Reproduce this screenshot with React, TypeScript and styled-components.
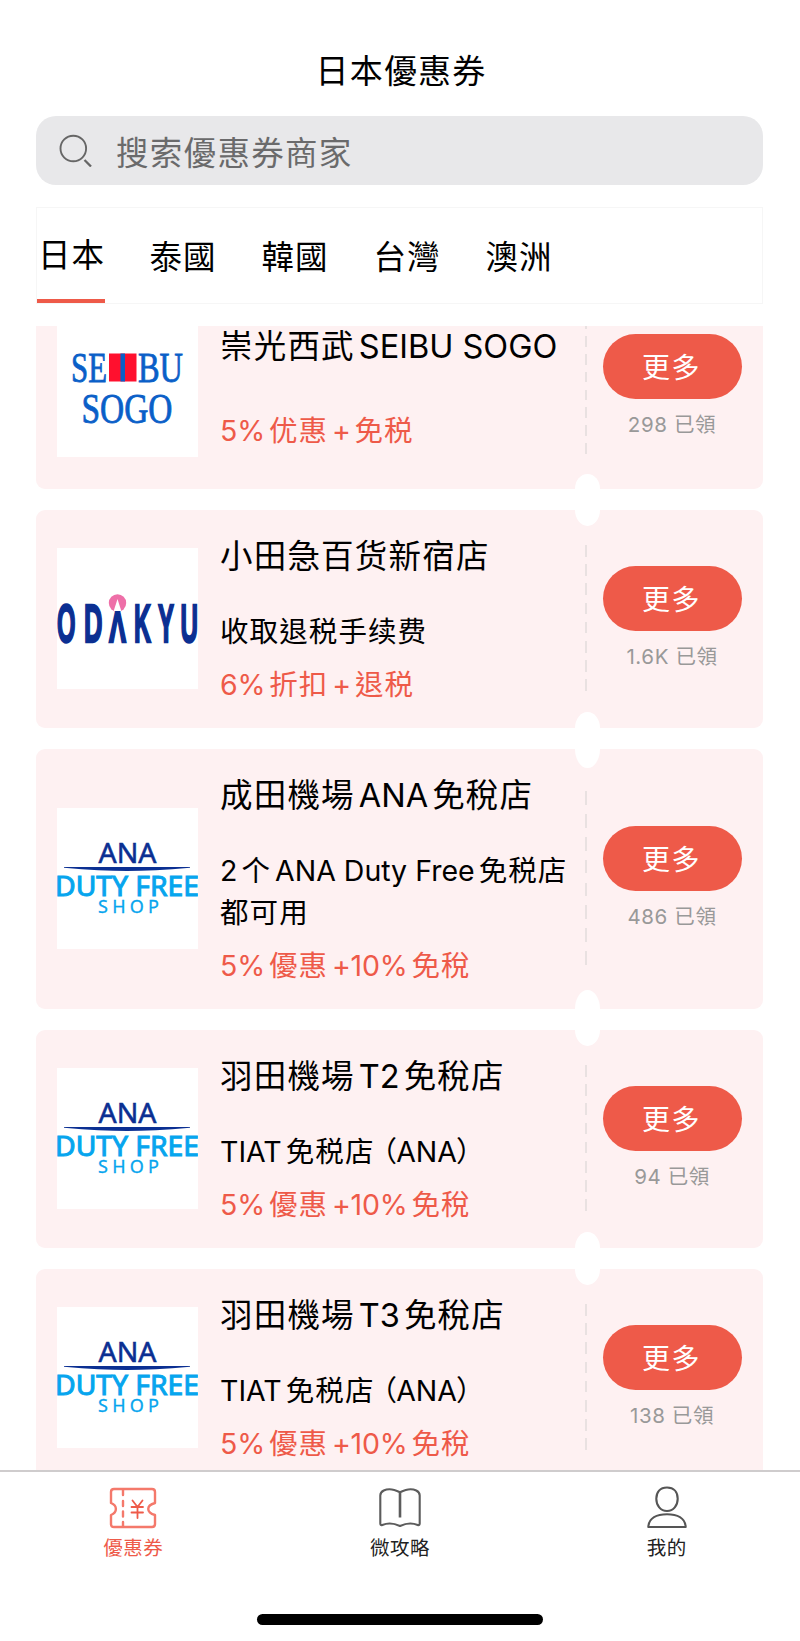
import React from 'react';
import styled, { createGlobalStyle } from 'styled-components';

const CORAL = '#ee5a49';

const GlobalStyle = createGlobalStyle`
  * { box-sizing: border-box; }
  body {
    margin: 0;
    background: #fff;
    color: #000;
    font-family: Inter, 'Noto Sans CJK TC', 'Noto Sans CJK SC', sans-serif;
  }
  button { font: inherit; border: 0; padding: 0; background: none; }
`;

const Screen = styled.div`
  width: 800px;
  height: 1641px;
  display: flex;
  flex-direction: column;
  overflow: hidden;
  background: #fff;
`;

const Header = styled.header`
  height: 116px;
  padding-top: 47px;
`;

const PageTitle = styled.h1`
  margin: 0;
  padding-left: 2px;
  text-align: center;
  font-size: 33px;
  font-weight: 400;
  line-height: 48px;
  letter-spacing: 1.2px;
`;

const SearchBar = styled.div`
  height: 69px;
  flex: none;
  margin: 0 37px 0 36px;
  padding: 0 0 1px 23px;
  display: flex;
  align-items: center;
  gap: 23px;
  border-radius: 20px;
  background: #e8e8ea;
  color: #6a6a6b;
  font-size: 32.5px;
  letter-spacing: 1.3px;
`;

const TabBar = styled.nav`
  height: 97px;
  flex: none;
  margin: 22px 37px 22px 36px;
  border: 1px solid #f6f6f6;
  display: flex;
  gap: 44px;
`;

const Tab = styled.button<{ $active?: boolean }>`
  width: 68px;
  padding: ${p => (p.$active ? '0 0 3px 1px' : '1px 0 0')};
  border-bottom: 4px solid ${p => (p.$active ? CORAL : 'transparent')};
  font-size: 32.5px;
  letter-spacing: 1px;
  white-space: nowrap;
  text-align: center;
`;

const List = styled.main`
  height: 1144px;
  flex: none;
  padding: 0 37px 0 36px;
  overflow: hidden;
  display: flex;
  flex-direction: column;
  gap: 21px;

  & > :first-child { margin-top: -41px; }
`;

const Card = styled.article`
  position: relative;
  flex: none;
  min-height: 204px;
  padding: 21px 21px 22px;
  display: flex;
  align-items: center;
  border-radius: 9px;
  background: #fef1f2;
`;

const Notch = styled.i<{ $edge: 'top' | 'bottom' }>`
  position: absolute;
  left: 539px;
  width: 25px;
  height: 14.6%;
  ${p => p.$edge}: -7.3%;
  border-radius: 50%;
  background: #fff;
`;

const LogoBox = styled.div`
  width: 141px;
  height: 141px;
  flex: none;
  background: #fff;
  svg { display: block; }
`;

const Info = styled.div`
  flex: 1;
  min-width: 0;
  padding-left: 22px;
  white-space: pre;
`;

const Name = styled.h2<{ $alone: boolean }>`
  margin: 0 0 ${p => (p.$alone ? 38 : 29)}px;
  padding-top: 1px;
  font-size: 32.5px;
  font-weight: 400;
  line-height: 50px;
  letter-spacing: 1.2px;
`;

const Note = styled.p`
  margin: 0;
  font-size: 28.5px;
  line-height: 42px;
  letter-spacing: 1.1px;
`;

const Latin = styled.span<{ $first: boolean; $last: boolean }>`
  margin-left: ${p => (p.$first ? 0 : 4)}px;
  margin-right: ${p => (p.$last ? 0 : 4)}px;
  letter-spacing: 0;
`;

const Offer = styled.p`
  margin: 11px 0 0;
  color: ${CORAL};
  font-size: 28.5px;
  line-height: 42px;
  letter-spacing: 1px;

  ${Latin} { letter-spacing: -0.2px; }
`;

const Paren = styled.span<{ $open: boolean }>`
  margin-left: ${p => (p.$open ? -6 : -1)}px;
  margin-right: ${p => (p.$open ? -2 : 0)}px;
`;

const PerforationTrack = styled.div`
  align-self: stretch;
  flex: none;
  display: flex;
  margin: -21px 16px -22px 0;
  padding-bottom: 2px;
`;

const Perforation = styled.i`
  width: 2px;
  height: 67.5%;
  align-self: center;
  background: repeating-linear-gradient(to bottom, #e9e1e1 0 7.89%, transparent 7.89% 13.158%);
`;

const Action = styled.div`
  width: 139px;
  flex: none;
  display: flex;
  flex-direction: column;
  align-items: center;
  padding-top: 1px;
`;

const MoreButton = styled.button`
  width: 139px;
  height: 65px;
  padding: 0 2px 1px 0;
  border-radius: 33px;
  background: ${CORAL};
  color: #fff;
  font-size: 28px;
  letter-spacing: 1.4px;
  text-align: center;
`;

const Count = styled.span`
  margin-top: 10px;
  padding-right: 1px;
  color: #999;
  font-size: 20.5px;
  line-height: 32px;
  letter-spacing: 0.6px;
  white-space: nowrap;
`;

const BottomNav = styled.nav`
  height: 110px;
  flex: none;
  display: grid;
  grid-template-columns: 1fr 1fr 1fr;
  border-top: 2px solid #cfcccd;
`;

const NavItem = styled.button<{ $active?: boolean }>`
  padding-top: 13px;
  display: flex;
  flex-direction: column;
  align-items: center;
  color: ${p => (p.$active ? CORAL : '#222')};
  font-size: 19.5px;
  line-height: 30px;
  letter-spacing: 0.5px;
  svg { display: block; }
`;

const HomeIndicator = styled.div`
  width: 286px;
  height: 11px;
  flex: none;
  margin: 34px auto 0;
  border-radius: 6px;
  background: #000;
`;

/* Splits a string so Latin runs get a thin gap against neighbouring Han characters. */
const Mixed = ({ text }: { text: string }) => {
  const parts = text.split(/([\x21-\x7e]+(?: [\x21-\x7e]+)*|[（）])/).filter(Boolean);
  return (
    <>
      {parts.map((part, i) => {
        if (part === '（' || part === '）') return <Paren key={i} $open={part === '（'}>{part}</Paren>;
        if (/^[\x21-\x7e]/.test(part)) {
          const prev = parts[i - 1];
          const next = parts[i + 1];
          return (
            <Latin key={i} $first={!prev || prev === '（'} $last={!next || next === '）'}>
              {part}
            </Latin>
          );
        }
        return <React.Fragment key={i}>{part}</React.Fragment>;
      })}
    </>
  );
};

const fit = (w: number) => ({ textLength: w, lengthAdjust: 'spacingAndGlyphs' as const });

const SeibuLogo = () => (
  <svg width="141" height="141" viewBox="0 0 141 141" fontFamily="'Liberation Serif', serif" fill="#0a5fc8" stroke="#0a5fc8" strokeWidth="0.8">
    <text x="14" y="65.5" fontSize="42" {...fit(36)}>SE</text>
    <rect x="52" y="37.5" width="27.5" height="28" fill="#ff102e" stroke="none" />
    <rect x="63.5" y="37.5" width="4.5" height="28" stroke="none" />
    <text x="81" y="65.5" fontSize="42" {...fit(45)}>BU</text>
    <text x="24.5" y="106.5" fontSize="42" {...fit(91)}>SOGO</text>
  </svg>
);

const OdakyuLogo = () => (
  <svg width="141" height="141" viewBox="0 0 141 141" fontFamily="'Liberation Sans Narrow', 'Liberation Sans', sans-serif" fontWeight="700" fontSize="54.5" fill="#0b2f92" stroke="#0b2f92" strokeWidth="2.4">
    <circle cx="60.5" cy="55" r="8.7" fill="#ee6fa8" stroke="none" />
    <text x="0" y="94" {...fit(18.5)}>O</text>
    <text x="27" y="94" {...fit(18.5)}>D</text>
    <text x="52" y="94" fontSize="45" {...fit(17)}>Λ</text>
    <path d="M60.5 51 L64.3 63 H56.7 Z" fill="#fff" stroke="none" />
    <text x="77" y="94" {...fit(17)}>K</text>
    <text x="101" y="94" {...fit(16)}>Y</text>
    <text x="123.5" y="94" {...fit(17.5)}>U</text>
  </svg>
);

const AnaLogo = () => (
  <svg width="141" height="141" viewBox="0 0 141 141" fontFamily="'Noto Sans', 'Open Sans', sans-serif">
    <text x="41.5" y="54.5" fontSize="26.5" fontWeight="400" fill="#0b2f92" stroke="#0b2f92" strokeWidth="0.5" {...fit(58)}>ANA</text>
    <path d="M7 59 H133 V59.8 Q96 63 70 63 Q44 63 7 59.8 Z" fill="#0b2f92" />
    <text x="-2" y="88" fontSize="27" fontWeight="400" fill="#06a5ee" stroke="#06a5ee" strokeWidth="1" {...fit(144)}>DUTY FREE</text>
    <text x="41" y="105" fontSize="18" fill="#06a5ee" stroke="#06a5ee" strokeWidth="0.3" textLength="61">SHOP</text>
  </svg>
);

const SearchIcon = () => (
  <svg width="34" height="34" viewBox="0 0 34 34" fill="none" stroke="#666" strokeWidth="1.9">
    <circle cx="14.3" cy="15.5" r="12.8" />
    <path d="M25.5 27 L32 33.5" strokeWidth="2.3" />
  </svg>
);

const TicketIcon = () => (
  <svg width="48" height="48" viewBox="0 0 48 48" fill="none" stroke="#f4796b" strokeWidth="2.4" strokeLinecap="round" strokeLinejoin="round">
    <path d="M5 4 H43 Q46 4 46 7 V18 C37 20.5 37 27.5 46 30 V39 Q46 42 43 42 H5 Q2 42 2 39 V30 C8.5 27.5 8.5 20.5 2 18 V7 Q2 4 5 4 Z" />
    <path d="M14 5 V10 M14 16 V21 M14 26.5 V31.5 M14 37 V41" />
    <path d="M23.5 15.5 L28.5 22 L33.5 15.5 M28.5 22 V33 M22.5 22 H34 M22.5 27.5 H34" stroke={CORAL} strokeWidth="1.8" />
  </svg>
);

const BookIcon = () => (
  <svg width="48" height="48" viewBox="0 0 48 48" fill="none" stroke="#5c5c5c" strokeWidth="2.1" strokeLinejoin="round">
    <path d="M24 7.3 C20 5.3 16.5 4.2 13.5 4.2 C10.5 4.2 4.3 5.5 4.3 10.5 V38.5 Q4.3 40.6 6.3 40 C12 37.6 18 38.2 24 41 C30 38.2 36 37.6 41.7 40 Q43.7 40.6 43.7 38.5 V10.5 C43.7 5.5 37.5 4.2 34.5 4.2 C31.5 4.2 28 5.3 24 7.3 Z" />
    <path d="M24 8 V32.5" strokeWidth="2.6" />
  </svg>
);

const PersonIcon = () => (
  <svg width="48" height="48" viewBox="0 0 48 48" fill="none" stroke="#555" strokeWidth="2.1" strokeLinejoin="round">
    <path d="M24 2.5 C31 2.5 34.7 7 34.7 13.8 C34.7 20.5 30.5 26 24 26 C17.5 26 13.3 20.5 13.3 13.8 C13.3 7 17 2.5 24 2.5 Z" />
    <path d="M5.3 42 C5.8 33 14 29.2 24 29.2 C34 29.2 42.2 33 42.7 42 Z" />
  </svg>
);

interface Coupon {
  logo: () => React.JSX.Element;
  name: string;
  notes: string[];
  offer: string;
  claimed: string;
}

const coupons: Coupon[] = [
  { logo: SeibuLogo, name: '崇光西武SEIBU SOGO', notes: [], offer: '5%优惠+免税', claimed: '298' },
  { logo: OdakyuLogo, name: '小田急百货新宿店', notes: ['收取退税手续费'], offer: '6%折扣+退税', claimed: '1.6K' },
  { logo: AnaLogo, name: '成田機場ANA免稅店', notes: ['2个ANA Duty Free免税店', '都可用'], offer: '5%優惠+10%免稅', claimed: '486' },
  { logo: AnaLogo, name: '羽田機場T2免稅店', notes: ['TIAT免税店（ANA）'], offer: '5%優惠+10%免稅', claimed: '94' },
  { logo: AnaLogo, name: '羽田機場T3免稅店', notes: ['TIAT免税店（ANA）'], offer: '5%優惠+10%免稅', claimed: '138' },
];

const CouponCard = ({ logo: Logo, name, notes, offer, claimed }: Coupon) => (
  <Card>
    <LogoBox><Logo /></LogoBox>
    <Info>
      <Name $alone={notes.length === 0}><Mixed text={name} /></Name>
      {notes.map(line => <Note key={line}><Mixed text={line} /></Note>)}
      <Offer><Mixed text={offer} /></Offer>
    </Info>
    <PerforationTrack><Perforation /></PerforationTrack>
    <Action>
      <MoreButton>更多</MoreButton>
      <Count>{claimed} 已領</Count>
    </Action>
    <Notch $edge="top" />
    <Notch $edge="bottom" />
  </Card>
);

export default function App() {
  return (
    <Screen>
      <GlobalStyle />
      <Header><PageTitle>日本優惠券</PageTitle></Header>
      <SearchBar><SearchIcon />搜索優惠券商家</SearchBar>
      <TabBar>
        {['日本', '泰國', '韓國', '台灣', '澳洲'].map((label, i) => (
          <Tab key={label} $active={i === 0}>{label}</Tab>
        ))}
      </TabBar>
      <List>{coupons.map(c => <CouponCard key={c.name} {...c} />)}</List>
      <BottomNav>
        <NavItem $active><TicketIcon />優惠券</NavItem>
        <NavItem><BookIcon />微攻略</NavItem>
        <NavItem><PersonIcon />我的</NavItem>
      </BottomNav>
      <HomeIndicator />
    </Screen>
  );
}
